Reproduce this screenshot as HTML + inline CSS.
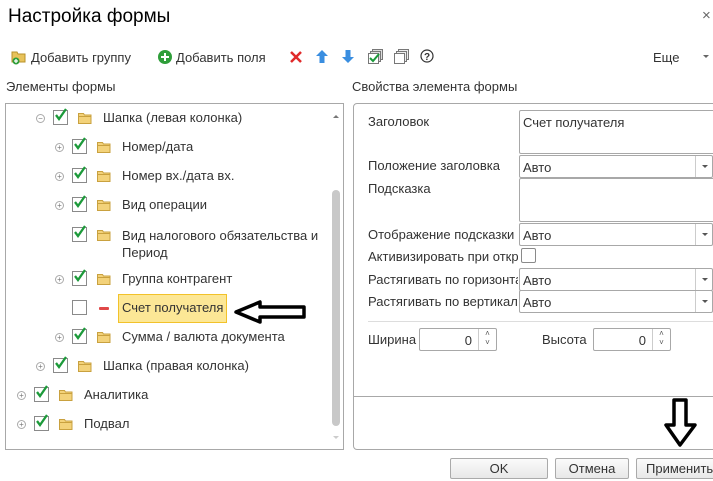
<!DOCTYPE html>
<html><head><meta charset="utf-8"><style>
*{box-sizing:border-box;margin:0;padding:0}
body{width:713px;height:481px;background:#fff;font-family:"Liberation Sans",Arial,sans-serif;font-size:13px;color:#333;position:relative;overflow:hidden}
.a{position:absolute;white-space:nowrap}
.cb{position:absolute;width:15px;height:15px;border:1px solid #8a8a8a;background:#fff}
.exp{position:absolute;width:9px;height:9px;border:1px solid #aaa;border-radius:50%;font-size:8px;line-height:7px;text-align:center;color:#777}
.fld{position:absolute;border:1px solid #a8a8a8;background:#fff;border-radius:2px}
.sel .dd{position:absolute;right:0;top:0;bottom:0;width:17px;border-left:1px solid #ccc}
.sel .dd:after{content:"";position:absolute;left:6px;top:9px;border:3px solid transparent;border-top:3px solid #555}
.btn{position:absolute;border:1px solid #aaa;border-radius:2px;background:linear-gradient(#fbfbfb,#e8e8e8);text-align:center;line-height:19px;color:#333}
</style></head><body>
<div class="a" style="left:8px;top:6px;font-size:19px;color:#000">Настройка формы</div>
<div class="a" style="left:702px;top:7px;font-size:15px;color:#666">×</div>

<svg class="a" style="left:11px;top:49px" width="16" height="16"><path d="M1 3h5l1 2h7v8H1z" fill="#e8c25a" stroke="#b8922a"/><circle cx="5" cy="12" r="3.5" fill="#2f9e3a"/><path d="M3 12h4M5 10v4" stroke="#fff" stroke-width="1.3"/></svg>
<div class="a" style="left:31px;top:50px">Добавить группу</div>
<svg class="a" style="left:157px;top:49px" width="16" height="16"><circle cx="8" cy="8" r="7" fill="#2f9e3a"/><path d="M4 8h8M8 4v8" stroke="#fff" stroke-width="2"/></svg>
<div class="a" style="left:176px;top:50px">Добавить поля</div>
<svg class="a" style="left:290px;top:51px" width="12" height="12"><path d="M1 1l10 10M11 1L1 11" stroke="#e02a2a" stroke-width="2.5"/></svg>
<svg class="a" style="left:316px;top:50px" width="12" height="13"><path d="M6 0l6 6H8.5v7h-5V6H0z" fill="#3a8ee0"/></svg>
<svg class="a" style="left:342px;top:50px" width="12" height="13"><path d="M6 13l6-6H8.5V0h-5v7H0z" fill="#3a8ee0"/></svg>
<svg class="a" style="left:368px;top:49px" width="15" height="15"><rect x="4.5" y=".5" width="10" height="10" fill="#ddd" stroke="#777"/><rect x="2.5" y="2.5" width="10" height="10" fill="#ddd" stroke="#777"/><rect x=".5" y="4.5" width="10" height="10" fill="#fff" stroke="#777"/><path d="M2 9l3 3 6-7" stroke="#1c9a3a" stroke-width="2" fill="none"/></svg>
<svg class="a" style="left:394px;top:49px" width="15" height="15"><rect x="4.5" y=".5" width="10" height="10" fill="#eee" stroke="#777"/><rect x="2.5" y="2.5" width="10" height="10" fill="#eee" stroke="#777"/><rect x=".5" y="4.5" width="10" height="10" fill="#fff" stroke="#777"/></svg>
<svg class="a" style="left:420px;top:49px" width="14" height="14"><circle cx="7" cy="7" r="6" fill="none" stroke="#333" stroke-width="1.2"/><text x="7" y="11" font-size="10" text-anchor="middle" font-family="Liberation Sans" font-weight="bold" fill="#333">?</text></svg>
<div class="a" style="left:653px;top:50px">Еще</div>
<div class="a" style="left:703px;top:55px;border:3px solid transparent;border-top:3px solid #666"></div>

<div class="a" style="left:6px;top:79px">Элементы формы</div>
<div class="a" style="left:352px;top:79px">Свойства элемента формы</div>

<div class="a" style="left:5px;top:103px;width:339px;height:347px;border:1px solid #a8a8a8"></div>
<div class="a" style="left:332px;top:190px;width:8px;height:236px;background:#c8c8c8;border-radius:4px"></div>
<div class="a" style="left:333px;top:112px;border:3px solid transparent;border-bottom:3px solid #777"></div>
<div class="a" style="left:333px;top:436px;border:3px solid transparent;border-top:3px solid #ccc"></div>

<svg width="0" height="0" style="position:absolute"><defs>
<symbol id="ck" viewBox="0 0 15 15"><path d="M3 7l3 4 7-10" stroke="#1c9a3a" stroke-width="2.3" fill="none"/></symbol>
<symbol id="fd" viewBox="0 0 14 12"><path d="M.5 1.5h5l1 1.5h6.5v8.5H.5z" fill="#f3d27a" stroke="#c9a13f"/><path d="M.5 4.5h13" stroke="#c9a13f"/></symbol>
</defs></svg>

<div class="exp" style="left:36px;top:114px">−</div><div class="cb" style="left:53px;top:110px"><svg width="15" height="15" style="position:absolute;left:-1px;top:-3px"><use href="#ck"/></svg></div><svg class="a" style="left:78px;top:112px" width="14" height="12"><use href="#fd"/></svg><div class="a" style="left:103px;top:110px">Шапка (левая колонка)</div>

<div class="exp" style="left:55px;top:143px">+</div><div class="cb" style="left:72px;top:139px"><svg width="15" height="15" style="position:absolute;left:-1px;top:-3px"><use href="#ck"/></svg></div><svg class="a" style="left:97px;top:141px" width="14" height="12"><use href="#fd"/></svg><div class="a" style="left:122px;top:139px">Номер/дата</div>

<div class="exp" style="left:55px;top:172px">+</div><div class="cb" style="left:72px;top:168px"><svg width="15" height="15" style="position:absolute;left:-1px;top:-3px"><use href="#ck"/></svg></div><svg class="a" style="left:97px;top:170px" width="14" height="12"><use href="#fd"/></svg><div class="a" style="left:122px;top:168px">Номер вх./дата вх.</div>

<div class="exp" style="left:55px;top:201px">+</div><div class="cb" style="left:72px;top:197px"><svg width="15" height="15" style="position:absolute;left:-1px;top:-3px"><use href="#ck"/></svg></div><svg class="a" style="left:97px;top:199px" width="14" height="12"><use href="#fd"/></svg><div class="a" style="left:122px;top:197px">Вид операции</div>

<div class="cb" style="left:72px;top:227px"><svg width="15" height="15" style="position:absolute;left:-1px;top:-3px"><use href="#ck"/></svg></div><svg class="a" style="left:97px;top:229px" width="14" height="12"><use href="#fd"/></svg><div class="a" style="left:122px;top:227px;line-height:17px">Вид налогового обязательства и<br>Период</div>

<div class="exp" style="left:55px;top:275px">+</div><div class="cb" style="left:72px;top:271px"><svg width="15" height="15" style="position:absolute;left:-1px;top:-3px"><use href="#ck"/></svg></div><svg class="a" style="left:97px;top:273px" width="14" height="12"><use href="#fd"/></svg><div class="a" style="left:122px;top:271px">Группа контрагент</div>

<div class="cb" style="left:72px;top:300px"></div><div class="a" style="left:99px;top:307px;width:10px;height:3px;background:#e04848;border-radius:1px"></div>
<div class="a" style="left:118px;top:294px;width:109px;height:29px;background:#fce796;border:1px solid #f2c22a"></div><div class="a" style="left:122px;top:300px;color:#333">Счет получателя</div>
<svg class="a" style="left:233px;top:300px" width="74" height="24"><path d="M3 12L27 2v5h44v10H27v5z" fill="none" stroke="#000" stroke-width="3.5" stroke-linejoin="round"/></svg>

<div class="exp" style="left:55px;top:333px">+</div><div class="cb" style="left:72px;top:329px"><svg width="15" height="15" style="position:absolute;left:-1px;top:-3px"><use href="#ck"/></svg></div><svg class="a" style="left:97px;top:331px" width="14" height="12"><use href="#fd"/></svg><div class="a" style="left:122px;top:329px">Сумма / валюта документа</div>

<div class="exp" style="left:36px;top:362px">+</div><div class="cb" style="left:53px;top:358px"><svg width="15" height="15" style="position:absolute;left:-1px;top:-3px"><use href="#ck"/></svg></div><svg class="a" style="left:78px;top:360px" width="14" height="12"><use href="#fd"/></svg><div class="a" style="left:103px;top:358px">Шапка (правая колонка)</div>

<div class="exp" style="left:17px;top:391px">+</div><div class="cb" style="left:34px;top:387px"><svg width="15" height="15" style="position:absolute;left:-1px;top:-3px"><use href="#ck"/></svg></div><svg class="a" style="left:59px;top:389px" width="14" height="12"><use href="#fd"/></svg><div class="a" style="left:84px;top:387px">Аналитика</div>

<div class="exp" style="left:17px;top:420px">+</div><div class="cb" style="left:34px;top:416px"><svg width="15" height="15" style="position:absolute;left:-1px;top:-3px"><use href="#ck"/></svg></div><svg class="a" style="left:59px;top:418px" width="14" height="12"><use href="#fd"/></svg><div class="a" style="left:84px;top:416px">Подвал</div>

<div class="a" style="left:353px;top:103px;width:370px;height:347px;border:1px solid #a8a8a8;border-radius:4px"></div>
<div class="a" style="left:354px;top:396px;width:359px;height:1px;background:#a8a8a8"></div>

<div class="a" style="left:368px;top:114px">Заголовок</div>
<div class="fld" style="left:519px;top:110px;width:200px;height:44px"><div class="a" style="left:3px;top:4px">Счет получателя</div></div>
<div class="a" style="left:368px;top:158px">Положение заголовка</div>
<div class="fld sel" style="left:519px;top:155px;width:194px;height:23px"><div class="a" style="left:3px;top:4px">Авто</div><div class="dd"></div></div>
<div class="a" style="left:368px;top:181px">Подсказка</div>
<div class="fld" style="left:519px;top:178px;width:200px;height:44px"></div>
<div class="a" style="left:368px;top:227px">Отображение подсказки</div>
<div class="fld sel" style="left:519px;top:223px;width:194px;height:23px"><div class="a" style="left:3px;top:4px">Авто</div><div class="dd"></div></div>
<div class="a" style="left:368px;top:249px;width:150px;overflow:hidden">Активизировать при открытии</div>
<div class="a" style="left:521px;top:248px;width:15px;height:15px;border:1px solid #8a8a8a;border-radius:2px"></div>
<div class="a" style="left:368px;top:272px;width:150px;overflow:hidden">Растягивать по горизонтали</div>
<div class="fld sel" style="left:519px;top:268px;width:194px;height:23px"><div class="a" style="left:3px;top:4px">Авто</div><div class="dd"></div></div>
<div class="a" style="left:368px;top:294px;width:150px;overflow:hidden">Растягивать по вертикали</div>
<div class="fld sel" style="left:519px;top:290px;width:194px;height:23px"><div class="a" style="left:3px;top:4px">Авто</div><div class="dd"></div></div>
<div class="a" style="left:368px;top:321px;width:345px;height:1px;background:#ddd"></div>

<div class="a" style="left:368px;top:332px">Ширина</div>
<div class="fld" style="left:419px;top:328px;width:78px;height:23px"><div class="a" style="right:24px;top:4px">0</div><div class="a" style="right:0;top:0;bottom:0;width:18px;border-left:1px solid #ccc;font-size:8px;line-height:9px;text-align:center;color:#555">˄<br>˅</div></div>
<div class="a" style="left:542px;top:332px">Высота</div>
<div class="fld" style="left:593px;top:328px;width:78px;height:23px"><div class="a" style="right:24px;top:4px">0</div><div class="a" style="right:0;top:0;bottom:0;width:18px;border-left:1px solid #ccc;font-size:8px;line-height:9px;text-align:center;color:#555">˄<br>˅</div></div>

<svg class="a" style="left:663px;top:398px" width="36" height="50"><path d="M11 2h12v25h9L17 47 3 27h8z" fill="none" stroke="#000" stroke-width="3.5" stroke-linejoin="round"/></svg>

<div class="btn" style="left:450px;top:458px;width:98px;height:21px">OK</div>
<div class="btn" style="left:555px;top:458px;width:74px;height:21px">Отмена</div>
<div class="btn" style="left:636px;top:458px;width:80px;height:21px;text-align:left;padding-left:9px">Применить</div>
</body></html>
